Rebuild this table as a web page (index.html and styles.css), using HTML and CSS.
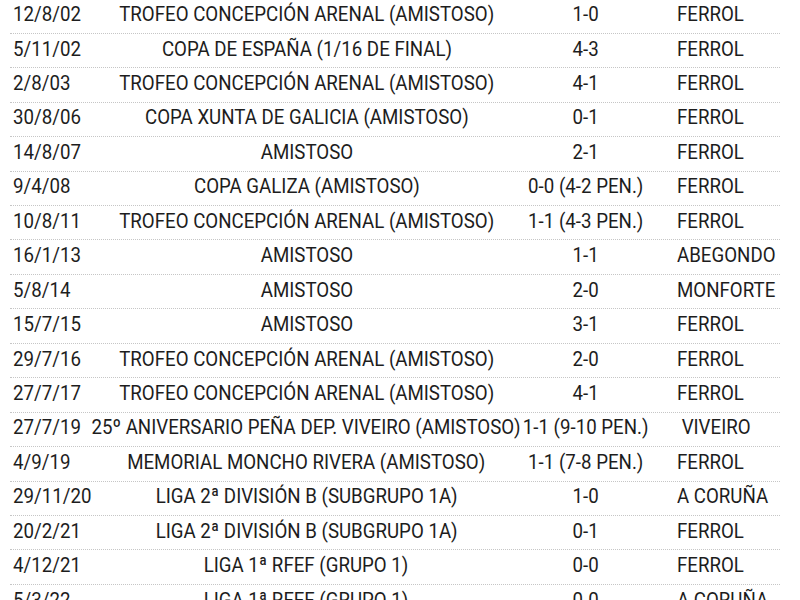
FILE: index.html
```html
<!DOCTYPE html>
<html lang="es">
<head>
<meta charset="utf-8">
<title>Partidos</title>
<link rel="stylesheet" href="styles.css">
</head>
<body>
<div class="table">
  <div class="row"><div class="c date"><span class="t">12/8/02</span></div><div class="c comp"><span class="t">TROFEO CONCEPCIÓN ARENAL (AMISTOSO)</span></div><div class="c score"><span class="t">1-0</span></div><div class="c venue"><span class="t">FERROL</span></div></div>
  <div class="row"><div class="c date"><span class="t">5/11/02</span></div><div class="c comp"><span class="t">COPA DE ESPAÑA (1/16 DE FINAL)</span></div><div class="c score"><span class="t">4-3</span></div><div class="c venue"><span class="t">FERROL</span></div></div>
  <div class="row"><div class="c date"><span class="t">2/8/03</span></div><div class="c comp"><span class="t">TROFEO CONCEPCIÓN ARENAL (AMISTOSO)</span></div><div class="c score"><span class="t">4-1</span></div><div class="c venue"><span class="t">FERROL</span></div></div>
  <div class="row"><div class="c date"><span class="t">30/8/06</span></div><div class="c comp"><span class="t">COPA XUNTA DE GALICIA (AMISTOSO)</span></div><div class="c score"><span class="t">0-1</span></div><div class="c venue"><span class="t">FERROL</span></div></div>
  <div class="row"><div class="c date"><span class="t">14/8/07</span></div><div class="c comp"><span class="t">AMISTOSO</span></div><div class="c score"><span class="t">2-1</span></div><div class="c venue"><span class="t">FERROL</span></div></div>
  <div class="row"><div class="c date"><span class="t">9/4/08</span></div><div class="c comp"><span class="t">COPA GALIZA (AMISTOSO)</span></div><div class="c score"><span class="t">0-0 (4-2 PEN.)</span></div><div class="c venue"><span class="t">FERROL</span></div></div>
  <div class="row"><div class="c date"><span class="t">10/8/11</span></div><div class="c comp"><span class="t">TROFEO CONCEPCIÓN ARENAL (AMISTOSO)</span></div><div class="c score"><span class="t">1-1 (4-3 PEN.)</span></div><div class="c venue"><span class="t">FERROL</span></div></div>
  <div class="row"><div class="c date"><span class="t">16/1/13</span></div><div class="c comp"><span class="t">AMISTOSO</span></div><div class="c score"><span class="t">1-1</span></div><div class="c venue"><span class="t">ABEGONDO</span></div></div>
  <div class="row"><div class="c date"><span class="t">5/8/14</span></div><div class="c comp"><span class="t">AMISTOSO</span></div><div class="c score"><span class="t">2-0</span></div><div class="c venue"><span class="t">MONFORTE</span></div></div>
  <div class="row"><div class="c date"><span class="t">15/7/15</span></div><div class="c comp"><span class="t">AMISTOSO</span></div><div class="c score"><span class="t">3-1</span></div><div class="c venue"><span class="t">FERROL</span></div></div>
  <div class="row"><div class="c date"><span class="t">29/7/16</span></div><div class="c comp"><span class="t">TROFEO CONCEPCIÓN ARENAL (AMISTOSO)</span></div><div class="c score"><span class="t">2-0</span></div><div class="c venue"><span class="t">FERROL</span></div></div>
  <div class="row"><div class="c date"><span class="t">27/7/17</span></div><div class="c comp"><span class="t">TROFEO CONCEPCIÓN ARENAL (AMISTOSO)</span></div><div class="c score"><span class="t">4-1</span></div><div class="c venue"><span class="t">FERROL</span></div></div>
  <div class="row"><div class="c date"><span class="t">27/7/19</span></div><div class="c comp"><span class="t">25º ANIVERSARIO PEÑA DEP. VIVEIRO (AMISTOSO)</span></div><div class="c score"><span class="t">1-1 (9-10 PEN.)</span></div><div class="c venue"><span class="t">&nbsp;VIVEIRO</span></div></div>
  <div class="row"><div class="c date"><span class="t">4/9/19</span></div><div class="c comp"><span class="t">MEMORIAL MONCHO RIVERA (AMISTOSO)</span></div><div class="c score"><span class="t">1-1 (7-8 PEN.)</span></div><div class="c venue"><span class="t">FERROL</span></div></div>
  <div class="row"><div class="c date"><span class="t">29/11/20</span></div><div class="c comp"><span class="t">LIGA 2ª DIVISIÓN B (SUBGRUPO 1A)</span></div><div class="c score"><span class="t">1-0</span></div><div class="c venue"><span class="t">A CORUÑA</span></div></div>
  <div class="row"><div class="c date"><span class="t">20/2/21</span></div><div class="c comp"><span class="t">LIGA 2ª DIVISIÓN B (SUBGRUPO 1A)</span></div><div class="c score"><span class="t">0-1</span></div><div class="c venue"><span class="t">FERROL</span></div></div>
  <div class="row"><div class="c date"><span class="t">4/12/21</span></div><div class="c comp"><span class="t">LIGA 1ª RFEF (GRUPO 1)</span></div><div class="c score"><span class="t">0-0</span></div><div class="c venue"><span class="t">FERROL</span></div></div>
  <div class="row"><div class="c date"><span class="t">5/3/22</span></div><div class="c comp"><span class="t">LIGA 1ª RFEF (GRUPO 1)</span></div><div class="c score"><span class="t">0-0</span></div><div class="c venue"><span class="t">A CORUÑA</span></div></div>
</div>
</body>
</html>
```

FILE: styles.css
```css
html, body {
  margin: 0;
  padding: 0;
  background: #ffffff;
  overflow: hidden;
}

body {
  font-family: Roboto, "Liberation Sans", sans-serif;
  font-size: 21px;
  color: #1d1d1d;
}

.table {
  width: 770px;
  margin: -0.6px 0 0 10px;
}

.row {
  display: grid;
  grid-template-columns: 80px 433px 125px 132px;
  height: 34.44px;
  box-sizing: border-box;
  padding-bottom: 3px;
  border-bottom: 1px dotted #c6c6c6;
}

.c {
  display: flex;
  align-items: center;
  min-width: 0;
  white-space: nowrap;
}

.t {
  display: inline-block;
  transform: scaleX(0.89);
  line-height: 1;
}

.date {
  justify-content: flex-start;
  padding-left: 3px;
}

.date .t,
.venue .t {
  transform-origin: left center;
}

.comp,
.score {
  justify-content: center;
}

.venue {
  justify-content: flex-start;
  padding-left: 29px;
}
```
